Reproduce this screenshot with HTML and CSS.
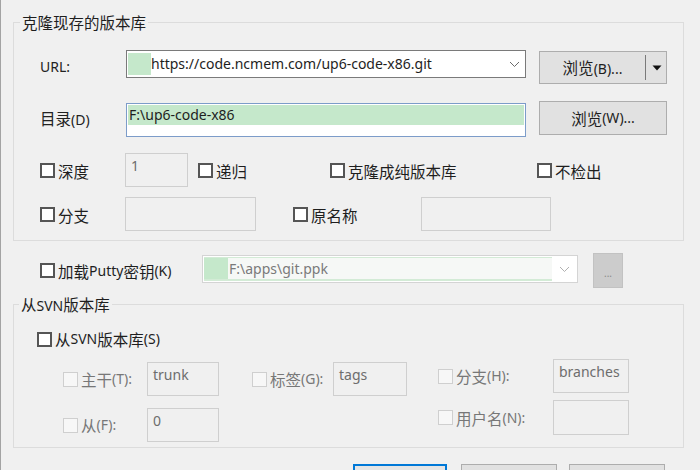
FILE: index.html
```html
<!DOCTYPE html>
<html lang="zh-CN">
<head>
<meta charset="utf-8">
<title>克隆</title>
<link rel="stylesheet" href="styles.css">
</head>
<body>
<div class="dialog">
  <fieldset class="group g1">
    <legend><span class="z">克隆现存的版本库</span></legend>
    <div class="gbody g1body">
      <div class="row r-url">
        <span class="lbl">URL:</span>
        <div class="combo">
          <span class="hl"></span>
          <span class="val">https://code.ncmem.com/up6-code-x86.git</span>
          <svg class="chev" width="11" height="7" viewBox="0 0 11 7"><path d="M1 1 L5.5 5.5 L10 1" fill="none" stroke="#6a6a6a" stroke-width="1"/></svg>
        </div>
        <div class="btn split">
          <span class="btxt"><span class="z">浏览</span>(B)...</span>
          <span class="sep"></span>
          <svg class="tri" width="10" height="6" viewBox="0 0 10 6"><path d="M0.5 0.5 H9.5 L5 5.5 Z" fill="#111"/></svg>
        </div>
      </div>
      <div class="row r-dir">
        <span class="lbl"><span class="z">目录</span>(D)</span>
        <div class="edit focus"><span class="fill">F:\up6-code-x86</span></div>
        <div class="btn wbtn"><span class="z">浏览</span>(W)...</div>
      </div>
      <div class="row r-opts">
        <label class="chk w85"><span class="box"></span><span class="z">深度</span></label>
        <div class="edit dis w63">1</div>
        <label class="chk ml10 w132"><span class="box"></span><span class="z">递归</span></label>
        <label class="chk w207"><span class="box"></span><span class="z">克隆成纯版本库</span></label>
        <label class="chk"><span class="box"></span><span class="z">不检出</span></label>
      </div>
      <div class="row r-branch">
        <label class="chk w85"><span class="box"></span><span class="z">分支</span></label>
        <div class="edit dis w131"></div>
        <label class="chk ml37 w128"><span class="box"></span><span class="z">原名称</span></label>
        <div class="edit dis w130"></div>
      </div>
    </div>
  </fieldset>

  <div class="row r-putty">
    <label class="chk w162"><span class="box"></span><span class="z">加载</span>Putty<span class="z">密钥</span>(K)</label>
    <div class="pcombo">
      <div class="pfield"><span class="hl"></span><span class="pval">F:\apps\git.ppk</span></div>
      <div class="pdrop">
        <svg width="11" height="7" viewBox="0 0 11 7"><path d="M1 1 L5.5 5.5 L10 1" fill="none" stroke="#b0b0b0" stroke-width="1"/></svg>
      </div>
    </div>
    <div class="dots">...</div>
  </div>

  <fieldset class="group g2">
    <legend><span class="z">从</span>SVN<span class="z">版本库</span></legend>
    <div class="gbody g2body">
      <div class="row r-svn">
        <label class="chk"><span class="box"></span><span class="z">从</span>SVN<span class="z">版本库</span>(S)</label>
      </div>
      <div class="cols">
        <div class="col colL">
          <div class="row sub h34">
            <label class="chk off w84"><span class="box"></span><span class="z">主干</span>(T):</label>
            <div class="edit dis w72">trunk</div>
          </div>
          <div class="row sub h34 mt12">
            <label class="chk off w84"><span class="box"></span><span class="z">从</span>(F):</label>
            <div class="edit dis w72">0</div>
          </div>
        </div>
        <div class="col colM">
          <div class="row sub h34">
            <label class="chk off w81"><span class="box"></span><span class="z">标签</span>(G):</label>
            <div class="edit dis w74">tags</div>
          </div>
        </div>
        <div class="col colR">
          <div class="row sub h34">
            <label class="chk off w115"><span class="box"></span><span class="z">分支</span>(H):</label>
            <div class="edit dis w76">branches</div>
          </div>
          <div class="row sub h35 mt7">
            <label class="chk off w115"><span class="box"></span><span class="z">用户名</span>(N):</label>
            <div class="edit dis w76"></div>
          </div>
        </div>
      </div>
    </div>
  </fieldset>

  <div class="actions">
    <div class="abtn default"></div>
    <div class="abtn"></div>
    <div class="abtn"></div>
  </div>
</div>
</body>
</html>
```

FILE: styles.css
```css
* { box-sizing: border-box; }
html, body { margin: 0; padding: 0; }
body {
  background: #f0f0f0;
  font-family: "Noto Sans", "Noto Sans CJK SC", sans-serif;
  font-size: 14px;
  color: #1e1e1e;
}
.z {
  font-family: "Noto Sans CJK SC", sans-serif;
  font-size: 15.5px;
}
.dialog {
  width: 700px;
  height: 470px;
  overflow: hidden;
  background: #f0f0f0;
  border-left: 1px solid #a3a3a3;
}
.group {
  margin: 0 0 0 12px;
  padding: 0;
  width: 671px;
  border: 1px solid #dcdcdc;
  min-width: 0;
}
.group legend {
  padding: 0 2px;
  line-height: 20px;
  height: 20px;
  color: #1e1e1e;
}
.g1 { margin-top: 12px; }
.g1 legend { margin-left: 6px; }
.g2 { margin-top: 6px; }
.g2 legend { margin-left: 5px; }
.gbody { display: flex; flex-direction: column; }
.g1body { padding: 18px 0 9px 26px; }
.g2body { padding: 15px 0 5px 0; }

.row { display: flex; align-items: flex-start; }
.lbl { width: 86px; line-height: 20px; height: 20px; margin-top: 7px; color: #222; white-space: nowrap; }

/* URL row */
.r-url { height: 34px; }
.combo {
  width: 400px; height: 28px;
  border: 1px solid #7a7a7a;
  background: #fff;
  padding: 1px;
  display: flex; align-items: center;
}
.combo .hl { width: 23px; height: 22px; background: #c5e8cb; flex: none; }
.combo .val { flex: 1; line-height: 22px; color: #1e1e1e; white-space: nowrap; }
.combo .chev { margin: 0 4px 0 0; flex: none; }

.btn {
  background: #e1e1e1;
  border: 1px solid #adadad;
  height: 34px;
  width: 128px;
  margin-left: 13px;
  display: flex; align-items: center; justify-content: center;
  color: #1e1e1e;
  white-space: nowrap;
  line-height: 20px;
}
.split { margin-top: 1px; height: 33px; justify-content: flex-start; }
.split .btxt { width: 105px; text-align: center; }
.split .sep { width: 1px; height: 25px; background: #7a7a7a; flex: none; }
.split .tri { margin-left: 6px; }

/* dir row */
.r-dir { margin-top: 17px; height: 35px; }
.edit {
  border: 1px solid #cfcfcf;
  background: #f0f0f0;
  height: 34px;
  padding: 2px 5px;
  line-height: 20px;
  color: #6d6d6d;
  white-space: nowrap;
}
.edit.focus {
  width: 400px;
  margin-top: 2px;
  border-color: #7c9cc9;
  background: #fff;
  padding: 1px;
}
.edit.focus .fill {
  display: block;
  height: 20px;
  line-height: 20px;
  background: #c5e8cb;
  color: #1e1e1e;
  padding-left: 1px;
}
.wbtn { margin-top: 0; }

/* option rows */
.r-opts { margin-top: 17px; height: 34px; }
.r-branch { margin-top: 10px; height: 34px; }
.chk {
  display: flex; align-items: center;
  height: 100%;
  line-height: 20px;
  color: #1e1e1e;
  white-space: nowrap;
}
.r-opts .chk, .r-branch .chk { height: 34px; padding-top: 1px; }
.box {
  width: 15px; height: 15px;
  border: 2px solid #555;
  background: #fff;
  margin-right: 3px;
  flex: none;
}
.chk.off { color: #777; }
.chk.off .box { border: 1px solid #cfcfcf; background: #f7f7f7; }

.w63 { width: 63px; }
.w72 { width: 72px; }
.w74 { width: 74px; }
.w76 { width: 76px; }
.w81 { width: 81px; }
.w84 { width: 84px; }
.w85 { width: 85px; }
.w115 { width: 115px; }
.w128 { width: 128px; }
.w130 { width: 130px; }
.w131 { width: 131px; }
.w132 { width: 132px; }
.w162 { width: 162px; }
.w207 { width: 207px; }
.ml10 { margin-left: 10px; }
.ml37 { margin-left: 37px; }
.mt7 { margin-top: 7px; }
.mt12 { margin-top: 12px; }

/* putty row */
.r-putty { margin-top: 12px; height: 35px; padding-left: 39px; }
.r-putty .chk { height: 35px; }
.pcombo {
  width: 376px; height: 28px;
  margin-top: 2px;
  border: 1px solid #d4d4d4;
  background: #fff;
  padding: 1px;
  display: flex;
}
.pfield {
  flex: 1;
  display: flex;
  background: #f6f8f6;
  border-top: 1px solid #d3ebd6;
  border-bottom: 2px solid #d3ebd6;
}
.pfield .hl { width: 24px; background: #c5e8cb; flex: none; }
.pval { line-height: 22px; color: #7a7a7a; padding-left: 1px; }
.pdrop { width: 24px; display: flex; align-items: center; justify-content: center; }
.dots {
  margin-left: 15px;
  width: 30px; height: 35px;
  background: #cccccc;
  border: 1px solid #c2c2c2;
  color: #8a8a8a;
  font-size: 10px;
  display: flex; align-items: center; justify-content: center;
  padding-top: 4px;
}

/* svn group */
.r-svn { padding-left: 23px; height: 20px; }
.cols { display: flex; align-items: flex-start; margin-top: 10px; padding-left: 49px; }
.col { display: flex; flex-direction: column; }
.colL { margin-top: 3px; }
.colM { margin-top: 3px; margin-left: 33px; }
.colR { margin-left: 31px; }
.sub { align-items: center; }
.sub .chk { height: auto; }
.h34 { height: 34px; }
.h35 { height: 35px; }
.sub .edit { height: 100%; }

/* bottom buttons */
.actions {
  display: flex;
  justify-content: flex-end;
  padding-right: 35px;
  margin-top: 16px;
  gap: 14px;
}
.abtn {
  width: 96px; height: 26px;
  background: #e1e1e1;
  border: 1px solid #adadad;
}
.abtn.default { width: 94px; border: 2px solid #0078d7; background: #e5e5e5; }
.abtn + .abtn + .abtn { margin-left: -2px; }
```
